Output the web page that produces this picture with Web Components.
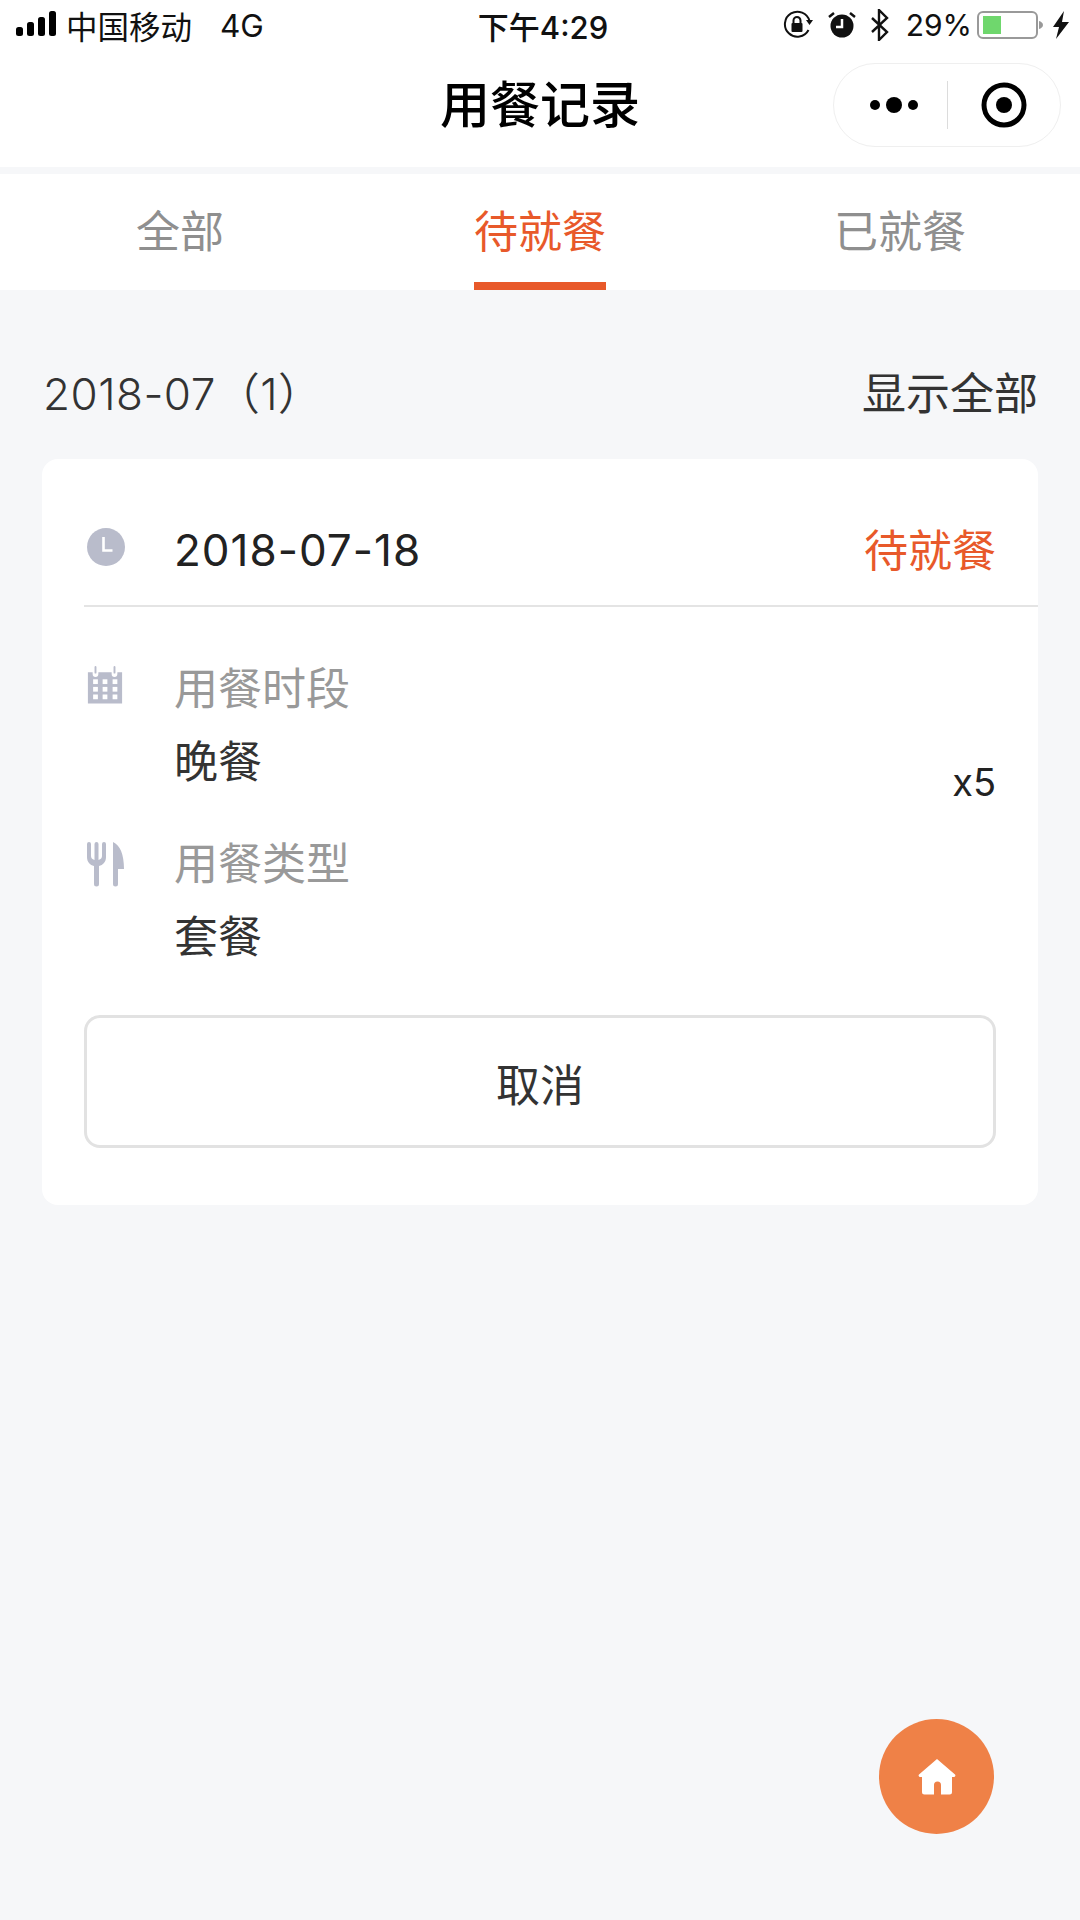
<!DOCTYPE html>
<html lang="zh">
<head>
<meta charset="utf-8">
<title>用餐记录</title>
<style>
  html, body { margin: 0; padding: 0; }
  body {
    width: 1080px;
    height: 1920px;
    overflow: hidden;
    background: #f6f7f9;
    font-family: "Inter", "Noto Sans CJK SC", sans-serif;
    color: #333;
  }
</style>
</head>
<body>
<status-bar></status-bar>
<nav-bar title="用餐记录"></nav-bar>
<tab-bar></tab-bar>
<section-head count="2018-07（1）" action="显示全部"></section-head>
<meal-card date="2018-07-18" status="待就餐" qty="x5" action="取消">
  <info-row icon="calendar" label="用餐时段" value="晚餐"></info-row>
  <info-row icon="cutlery" label="用餐类型" value="套餐"></info-row>
</meal-card>
<home-fab></home-fab>

<script>
const ICONS = {
    clock: `<svg viewBox="0 0 40 40" width="40" height="40"><circle cx="20" cy="20" r="19" fill="#b9bccb"/><path d="M17.5 10v13.500h9" fill="none" stroke="#fff" stroke-width="2.600"/></svg>`,
    calendar: `<svg viewBox="0 0 40 40" width="38" height="38"><path d="M2 6.500h5v2a3 3 0 0 0 6 0v-2h14v2a3 3 0 0 0 6 0v-2h5v33H2z" fill="#b9bccb"/><rect x="9" y="0" width="2" height="8" rx="1" fill="#b9bccb"/><rect x="29" y="0" width="2" height="8" rx="1" fill="#b9bccb"/><g fill="#fff"><rect x="7.500" y="14" width="5" height="5"/><rect x="17.500" y="14" width="5" height="5"/><rect x="28" y="14" width="5" height="5"/><rect x="7.500" y="22" width="5" height="5"/><rect x="17.500" y="22" width="5" height="5"/><rect x="28" y="22" width="5" height="5"/><rect x="7.500" y="30" width="5" height="5"/><rect x="17.500" y="30" width="5" height="5"/><rect x="28" y="30" width="5" height="5"/></g></svg>`,
    cutlery: `<svg viewBox="0 0 40 46" width="40" height="46"><path d="M1 3a2 2 0 0 1 4 0v12c0 2 1 3 3.500 4V3a2 2 0 0 1 4 0v16c2.500-1 3.500-2 3.500-4V3a2 2 0 0 1 4 0v13c0 5-3 8-7 9v18a2.500 2.500 0 0 1-5 0V25C4 24 1 21 1 16z" fill="#b9bccb"/><path d="M27 1c7 3 11 12 11 27h-6v15a2.500 2.500 0 0 1-5 0z" fill="#b9bccb"/></svg>`
};

class StatusBar extends HTMLElement {
    constructor() {
        super();
        this.attachShadow({mode: 'open'});
    }

    connectedCallback() {
        this.shadowRoot.innerHTML = `
        <style>
            :host { display: grid; grid-template-columns: 1fr auto 1fr; align-items: center; box-sizing: border-box; height: 54px; padding: 0 10px 4px 16px; background: #fff; color: #111; font-size: 31.500px; }
            .left, .right { display: flex; align-items: center; }
            .right { justify-content: flex-end; }
            .carrier { margin-left: 8px; }
            .net { margin-left: 28px; }
            .time { font-weight: 500; font-size: 31px; }
            .pct { margin: 0 5px 0 16px; font-size: 30px; }
            svg { display: block; }
        </style>
        <div class="left">
            <svg width="42" height="28" viewBox="0 0 42 28"><rect x="0" y="16" width="7" height="9" rx="2.500"/><rect x="11" y="11" width="7" height="14" rx="2.500"/><rect x="22" y="6" width="7" height="19" rx="2.500"/><rect x="33" y="0" width="7" height="25" rx="2.500"/></svg>
            <span class="carrier">中国移动</span><span class="net">4G</span>
        </div>
        <div class="time">下午4:29</div>
        <div class="right">
            <svg width="30" height="30" viewBox="0 0 30 30"><path d="M25.500 20A12.500 12.500 0 1 1 26.500 11" fill="none" stroke="#111" stroke-width="2"/><path d="M23 10h7l-3.500 5z" fill="#111"/><rect x="8.500" y="13" width="11" height="9" rx="1" fill="#111"/><path d="M10.500 13v-2.500a3.500 3.500 0 0 1 7 0V13" fill="none" stroke="#111" stroke-width="2"/></svg>
            <svg style="margin-left:15px" width="28" height="28" viewBox="0 0 28 28"><circle cx="14" cy="15" r="11.500" fill="#111"/><path d="M14 8v8H8" fill="none" stroke="#fff" stroke-width="2.500"/><path d="M1 6l5-4M27 6l-5-4" stroke="#111" stroke-width="2.500"/></svg>
            <svg style="margin-left:14px" width="20" height="32" viewBox="0 0 20 32"><path d="M2 9l15 14-8 8V1l8 8L2 23" fill="none" stroke="#111" stroke-width="2.400"/></svg>
            <span class="pct">29%</span>
            <svg width="66" height="30" viewBox="0 0 66 30"><rect x="1" y="2" width="59" height="26" rx="5" fill="#fff" stroke="#999" stroke-width="2"/><rect x="6" y="6" width="18" height="18" fill="#6fd76d"/><path d="M62 11c2 .5 4 2 4 4s-2 3.500-4 4z" fill="#999"/></svg>
            <svg style="margin-left:9px" width="18" height="28" viewBox="0 0 18 28"><path d="M12 0L1 16h6l-3 12 13-17h-7z" fill="#111"/></svg>
        </div>`;
    }
}

class NavBar extends HTMLElement {
    constructor() {
        super();
        this.attachShadow({mode: 'open'});
    }

    connectedCallback() {
        this.shadowRoot.innerHTML = `
        <style>
            :host { display: grid; grid-template-columns: 1fr auto 1fr; align-items: center; box-sizing: border-box; height: 113px; padding: 0 19px 12px 19px; background: #fff; color: #000; }
            h1 { margin: 0; font-size: 50px; font-weight: 500; line-height: 1; }
            .capsule { justify-self: end; box-sizing: border-box; width: 228px; height: 84px; border: 1px solid #efefef; border-radius: 42px; display: flex; align-items: center; }
            .half { width: 50%; box-sizing: border-box; display: flex; align-items: center; justify-content: center; }
            .half.more { padding-left: 8px; }
            .sep { flex: none; width: 1px; height: 48px; background: #dcdcdc; }
            svg { display: block; }
        </style>
        <span></span>
        <h1>${this.getAttribute('title')}</h1>
        <div class="capsule">
            <div class="half more"><svg width="48" height="20" viewBox="0 0 48 20"><circle cx="5" cy="10" r="5"/><circle cx="24" cy="10" r="8"/><circle cx="43" cy="10" r="5"/></svg></div>
            <div class="sep"></div>
            <div class="half"><svg width="46" height="46" viewBox="0 0 46 46"><circle cx="23" cy="23" r="20" fill="none" stroke="#000" stroke-width="5"/><circle cx="23" cy="23" r="8"/></svg></div>
        </div>`;
    }
}

class TabBar extends HTMLElement {
    constructor() {
        super();
        this.attachShadow({mode: 'open'});
    }

    connectedCallback() {
        const tabs = ['全部', '待就餐', '已就餐'];
        this.shadowRoot.innerHTML = `
        <style>
            :host { display: grid; grid-template-columns: 360px 360px 360px; height: 116px; margin-top: 7px; background: #fff; font-size: 44px; color: #8f8f8f; }
            .tab { display: flex; justify-content: center; }
            .tab span { box-sizing: border-box; height: 116px; line-height: 116px; }
            .on span { color: #e8592a; border-bottom: 8px solid #e8592a; }
        </style>
        ${tabs.map((t, i) => `<div class="tab ${i === 1 ? 'on' : ''}"><span>${t}</span></div>`).join('')}`;
    }
}

class SectionHead extends HTMLElement {
    constructor() {
        super();
        this.attachShadow({mode: 'open'});
    }

    connectedCallback() {
        this.shadowRoot.innerHTML = `
        <style>
            :host { display: flex; justify-content: space-between; align-items: center; box-sizing: border-box; height: 169px; padding: 32px 42px 0 43px; font-size: 44px; color: #333; }
            .count { font-weight: 350; letter-spacing: 0.5px; }
        </style>
        <span class="count">${this.getAttribute('count')}</span>
        <span>${this.getAttribute('action')}</span>`;
    }
}

class InfoRow extends HTMLElement {
    constructor() {
        super();
        this.attachShadow({mode: 'open'});
    }

    connectedCallback() {
        this.shadowRoot.innerHTML = `
        <style>
            :host { display: grid; grid-template-columns: 88px 1fr; height: 175px; font-size: 44px; }
            .ico { padding-top: 7px; }
            .label { color: #999; line-height: 56px; margin-top: 2px; }
            .value { color: #333; line-height: 56px; margin-top: 17px; }
            svg { display: block; }
        </style>
        <div class="ico">${ICONS[this.getAttribute('icon')]}</div>
        <div>
            <div class="label">${this.getAttribute('label')}</div>
            <div class="value">${this.getAttribute('value')}</div>
        </div>`;
    }
}

class MealCard extends HTMLElement {
    constructor() {
        super();
        this.attachShadow({mode: 'open'});
    }

    connectedCallback() {
        this.shadowRoot.innerHTML = `
        <style>
            :host { display: block; box-sizing: border-box; width: 996px; height: 746px; margin-left: 42px; padding: 0 0 0 42px; background: #fff; border-radius: 16px; }
            .head { display: flex; align-items: center; height: 148px; padding: 36px 42px 0 2px; border-bottom: 2px solid #e4e4e4; box-sizing: border-box; }
            .head svg { display: block; margin: 0 48px 6px 0; }
            .date { flex: 1; font-size: 44px; font-weight: 400; letter-spacing: 1px; color: #222; }
            .status { font-size: 44px; color: #e8592a; margin-bottom: 4px; }
            .rows { display: flex; padding: 52px 42px 0 2px; height: 350px; box-sizing: border-box; }
            .list { flex: 1; }
            .qty { margin-top: 96px; font-size: 38px; color: #222; line-height: 54px; }
            button { display: block; box-sizing: border-box; width: 912px; height: 133px; margin-top: 58px; background: #fff; border: 3px solid #e2e2e2; border-radius: 16px; font: inherit; font-size: 44px; color: #333; padding: 2px 0 0; }
        </style>
        <div class="head">
            ${ICONS.clock}
            <span class="date">${this.getAttribute('date')}</span>
            <span class="status">${this.getAttribute('status')}</span>
        </div>
        <div class="rows">
            <div class="list"><slot></slot></div>
            <span class="qty">${this.getAttribute('qty')}</span>
        </div>
        <button type="button">${this.getAttribute('action')}</button>`;
    }
}

class HomeFab extends HTMLElement {
    constructor() {
        super();
        this.attachShadow({mode: 'open'});
    }

    connectedCallback() {
        this.shadowRoot.innerHTML = `
        <style>
            :host { position: absolute; left: 879px; top: 1719px; width: 115px; height: 115px; border-radius: 50%; background: #ef8147; display: flex; align-items: center; justify-content: center; }
            svg { display: block; }
        </style>
        <svg width="38" height="36" viewBox="0 0 38 36"><path d="M19 0L37 15.500a1.500 1.500 0 0 1-1 2.500h-2v15a2.500 2.500 0 0 1-2.500 2.500H23V26a3.500 3.500 0 0 0-7 0v9.500H6.500A2.500 2.500 0 0 1 4 33V18H2a1.500 1.500 0 0 1-1-2.500z" fill="#fff"/></svg>`;
    }
}

customElements.define('status-bar', StatusBar);
customElements.define('nav-bar', NavBar);
customElements.define('tab-bar', TabBar);
customElements.define('section-head', SectionHead);
customElements.define('info-row', InfoRow);
customElements.define('meal-card', MealCard);
customElements.define('home-fab', HomeFab);
</script>
</body>
</html>
